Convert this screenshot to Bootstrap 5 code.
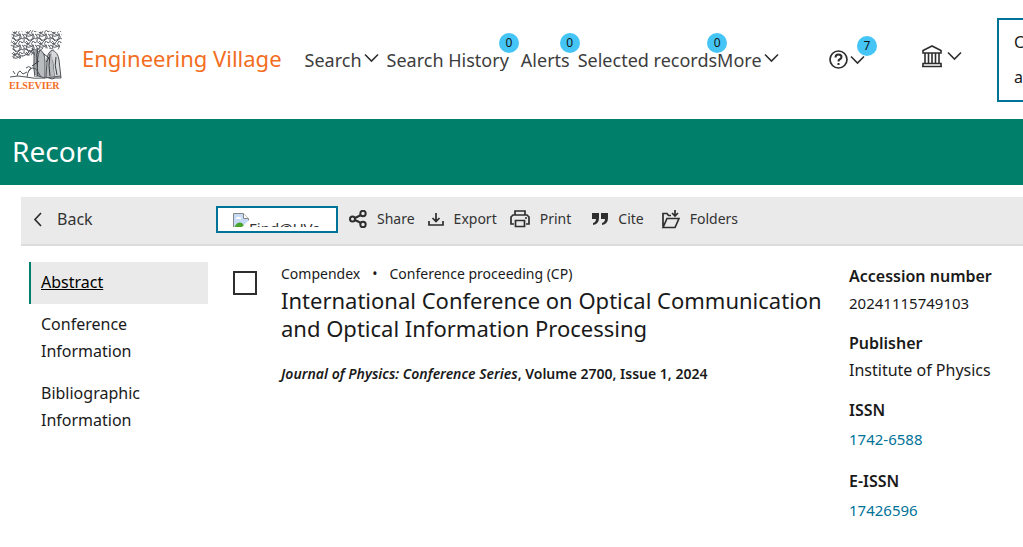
<!DOCTYPE html>
<html lang="en">
<head>
<meta charset="utf-8">
<meta name="viewport" content="width=device-width, initial-scale=1">
<title>Engineering Village - Record</title>
<link href="https://cdn.jsdelivr.net/npm/bootstrap@5.3.0/dist/css/bootstrap.min.css" rel="stylesheet">
<style>
body{font-family:"Noto Sans",sans-serif;font-size:16px;line-height:28px;color:#1a1a1a;overflow-x:hidden}
button{border:0;background:none;padding:0;color:inherit}
svg{display:block;flex:none;fill:none;stroke:#2e2e2e;stroke-width:2}
.site-head{height:119px;overflow:hidden;padding-left:9px}
.brand-mark{width:54px}
.brand-name{font-size:22px;color:#f36d21;margin-left:19px;padding-bottom:4px;white-space:nowrap}
.main-nav{font-size:18px;color:#3d3d3d;margin-left:23px;white-space:nowrap}
.main-nav a,.main-nav button{color:inherit;text-decoration:none;position:relative}
.main-nav svg{margin-bottom:4px}
.drop{gap:2px}
.count{position:absolute;width:20px;height:20px;border-radius:50%;background:#44c5f5;color:#111;font-size:12px;line-height:20px;text-align:center;right:-10px;top:-13px}
.help-btn .count{right:-12px;top:-14px}
.account{border:2px solid #007398;width:120px;height:84px;line-height:35px;padding-left:15px;text-align:left;font-size:16px;margin-left:35px;margin-right:-94px}
.band{background:#007f6b;color:#fff;height:66px;padding:0 0 2px 12px}
.band h1{font-size:28px;line-height:40px}
.tools{background:#eaeaea;border-bottom:2px solid #dcdcdc;margin:12px 0 0 21px;height:49px;color:#333;padding-left:11px}
.back-link{width:184px;gap:15px;color:inherit;text-decoration:none;padding-bottom:3px}
.tool-list{font-size:14px;gap:13px;padding-bottom:3px}
.tool-btn{display:flex;align-items:center;gap:10px}
.finder{border:2px solid #007398;background:#fff;width:122px;height:27px;padding:5px 15px 4px;margin-right:-2px}
.finder-img{height:14px;overflow:hidden;font-size:15px}
.finder-img span{line-height:30px}
.page-cols{padding:16px 0 0 29px}
.side{width:179px;line-height:27px}
.side a{display:block;color:inherit;text-decoration:none;padding:7px 50px 8px 10px;border-left:2px solid transparent}
.side a.active{background:#eaeaea;border-color:#007f6b;text-decoration:underline;color:#000}
.pick{appearance:none;width:24px;height:24px;border:2px solid #2e2e2e;margin:9px 24px 0 25px;flex:none;background:#fff}
.kind{font-size:14px;line-height:24px}
.rec-title{font-size:22px;line-height:28px;margin:0 0 20px;font-weight:400}
.source{font-size:14px;line-height:24px;font-weight:600}
.facts{width:174px;flex:none}
.facts dt{font-weight:600}
.facts dd{margin:0 0 11px;line-height:27px;padding-bottom:1px}
.facts .num{font-size:15px}
.facts a{display:block;line-height:30px;padding-bottom:1px;color:#007398;text-decoration:none}
</style>
</head>
<body>
<svg width="0" height="0" class="position-absolute">
  <defs>
    <symbol id="chev" viewBox="0 0 15 10"><path d="M1 1.500 7.500 8 14 1.500" stroke-width="1.600"/></symbol>
    <pattern id="leaf" width="13" height="11" patternUnits="userSpaceOnUse">
      <path d="M0 2q2-3 4 0t4-1 5 1M1 6q1-3 3-1t4 1 4-2M4 0q3 1 1 4t2 7M0 4q3 1 2 7M7 2q-2 2 2 3t0 5M11 0q-3 3 0 5t-2 6M0 9q3-3 5 0t8-1M3 8q3 0 4 3" stroke="#5b6066" stroke-width="1"/>
    </pattern>
  </defs>
</svg>
<header class="site-head d-flex align-items-center">
  <a href="#" class="brand-mark" aria-label="Elsevier">
    <svg width="54" height="60" viewBox="0 0 54 60" stroke="none">
      <path d="M2 2 8 1 15 2 22 0 30 2 38 0 45 2 52 1 53 8 52 16 49 20 42 19 35 18 29 20 25 24 21 26 15 25 11 29 5 29 2 25 4 20 1 14 3 9Z" fill="url(#leaf)" stroke="none"/>
      <g stroke="#50555b" stroke-width="1">
        <path d="M23 18q3 5 2 12t1 17M29 18q-2 7-1 14t1 14M26 20v25M20 20l6 5M34 18l-6 5M4 25q4-3 7 0t9-3"/>
        <path d="M31 20q-4 7-2 26l7 2V32q0-10-5-12M43 20q-5 3-5 11l-1 16 6 2 3-1-2-18" fill="#b9bcbf"/>
        <path d="M43 20q6 2 7 10l2 18-6 0" fill="#d8d9db"/>
        <path d="M35 24l5 4-3 4M30 31l-7 5M41 24q-2 12 0 22M47 27q-2 8 1 18M28 20v27" stroke="#353a40"/>
        <path d="M18 47q1-8 5-9t6 4l3 5M17 38q3-3 5 0l-2 3M8 46q1-5 3-5l3 3M1 47q8-2 16 0t18 1 17-2M6 44l-2-3M14 44l4-2"/>
      </g>
      <text x="0" y="59" font-family="Liberation Serif, serif" font-size="10" font-weight="700" fill="#f36d21" stroke="none">ELSEVIER</text>
    </svg>
  </a>
  <a href="#" class="brand-name text-decoration-none">Engineering Village</a>
  <nav class="main-nav d-flex align-items-center flex-grow-1" aria-label="Main">
    <button type="button" class="drop d-flex align-items-center">Search <svg width="15" height="10"><use href="#chev"/></svg></button>
    <a href="#" class="ms-2">Search History<span class="count">0</span></a>
    <a href="#" class="ms-2 ps-1">Alerts<span class="count">0</span></a>
    <a href="#" class="ms-2">Selected records<span class="count">0</span></a>
    <button type="button" class="drop d-flex align-items-center">More <svg width="15" height="10"><use href="#chev"/></svg></button>
    <button type="button" class="help-btn drop ms-auto d-flex align-items-center" aria-label="Help">
      <svg class="m-0" width="19" height="19" viewBox="0 0 19 19"><circle cx="9.500" cy="9.500" r="8.500" stroke-width="1.700"/><path d="M6.500 7.500q0-3 3-3t3 2.500q0 1.500-2 2.500-1 .5-1 2M9.500 13v2"/></svg>
      <svg class="m-0" width="15" height="10"><use href="#chev"/></svg><span class="count">7</span>
    </button>
  </nav>
  <button type="button" class="d-flex align-items-center gap-1 ms-5 ps-2 pb-2" aria-label="Institution">
    <svg width="22" height="24" viewBox="0 0 22 24"><path d="M1 22.500h20M2 19.500h18v3H2zM11 2 2 6.500V9h18V6.500zM4 9v10M7.500 9v10M11 9v10M14.500 9v10M18 9v10" stroke-width="1.600"/></svg>
    <svg width="15" height="10"><use href="#chev"/></svg>
  </button>
  <button type="button" class="account flex-shrink-0">C<br>a</button>
</header>
<div class="band d-flex align-items-center"><h1 class="m-0 fw-normal">Record</h1></div>
<div class="tools d-flex align-items-center">
  <a href="#" class="back-link d-flex align-items-center"><svg width="10" height="15" viewBox="0 0 10 15"><path d="M9 1 3 7.500 9 14" stroke-width="1.700"/></svg>Back</a>
  <div class="tool-list d-flex align-items-center">
    <button type="button" class="finder"><span class="finder-img d-flex">
      <svg width="16" height="16" viewBox="0 0 16 16" stroke="none"><path d="M.5.500h10l5 5v10H.500z" fill="#c6d9f5" stroke="#888" stroke-width="1"/><path d="M10.500.500v5h5" fill="#fff" stroke="#888" stroke-width="1"/><path d="M3 6q0-3 3-2 3 0 2 2z" fill="#fff" stroke="none"/><path d="M1 15q3-7 8-5l4 5z" fill="#4aa52e" stroke="none"/><path d="m7 16 9-9v9z" fill="#fff" stroke="none"/></svg><span>Find@UVa</span></span></button>
    <button type="button" class="tool-btn">
      <svg width="18" height="18" viewBox="0 0 18 18" stroke-width="1.700"><circle cx="3.500" cy="9" r="2.500"/><circle cx="14" cy="3.500" r="2.700"/><circle cx="14" cy="14.500" r="2.700"/><path d="m6 8 6-3M6 10l6 3"/></svg>Share</button>
    <button type="button" class="tool-btn"><svg width="16" height="18" viewBox="1 0 16 18"><path d="M9 3v8M5.500 8l3.500 3.500L12.500 8M2 11v4h14v-4" stroke-width="1.700"/></svg>Export</button>
    <button type="button" class="tool-btn"><svg width="20" height="18" viewBox="0 0 20 18"><path d="M5 5V1h10v4M4 14H1V7l2-2h14l2 2v7h-3M5.500 10.500h9v6h-9zM15 8h2" stroke-width="1.700"/></svg>Print</button>
    <button type="button" class="tool-btn ps-2"><svg width="16" height="16" viewBox="1 0 16 16"><path d="M1 2h7v5q0 6-6 7v-2q3-1 3-4H1zM10 2h7v5q0 6-6 7v-2q3-1 3-4h-4z" fill="#2e2e2e" stroke="none"/></svg>Cite</button>
    <button type="button" class="tool-btn ps-1"><svg width="19" height="20" viewBox="0 0 19 20"><path d="M2 17.500V4.500h4l1.500 2H10M2 18.500 6 9.500h12l-4 9zM14 1v6M11 4l3 3 3-3" stroke-width="1.700"/></svg>Folders</button>
  </div>
</div>
<main class="page-cols d-flex">
  <nav class="side flex-shrink-0" aria-label="Record sections">
    <a href="#" class="active">Abstract</a>
    <a href="#">Conference Information</a>
    <a href="#">Bibliographic Information</a>
  </nav>
  <input type="checkbox" class="pick" aria-label="Select record">
  <article class="flex-grow-1">
    <div class="kind">Compendex<span class="mx-2 px-1">•</span>Conference proceeding (CP)</div>
    <h2 class="rec-title">International Conference on Optical Communication and Optical Information Processing</h2>
    <p class="source m-0"><em>Journal of Physics: Conference Series</em>, Volume 2700, Issue 1, 2024</p>
  </article>
  <dl class="facts m-0">
    <dt>Accession number</dt><dd class="num">20241115749103</dd>
    <dt>Publisher</dt><dd>Institute of Physics</dd>
    <dt>ISSN</dt><dd class="num"><a href="#">1742-6588</a></dd>
    <dt>E-ISSN</dt><dd class="num"><a href="#">17426596</a></dd>
  </dl>
</main>
<script src="https://cdn.jsdelivr.net/npm/bootstrap@5.3.0/dist/js/bootstrap.bundle.min.js"></script>
</body>
</html>
